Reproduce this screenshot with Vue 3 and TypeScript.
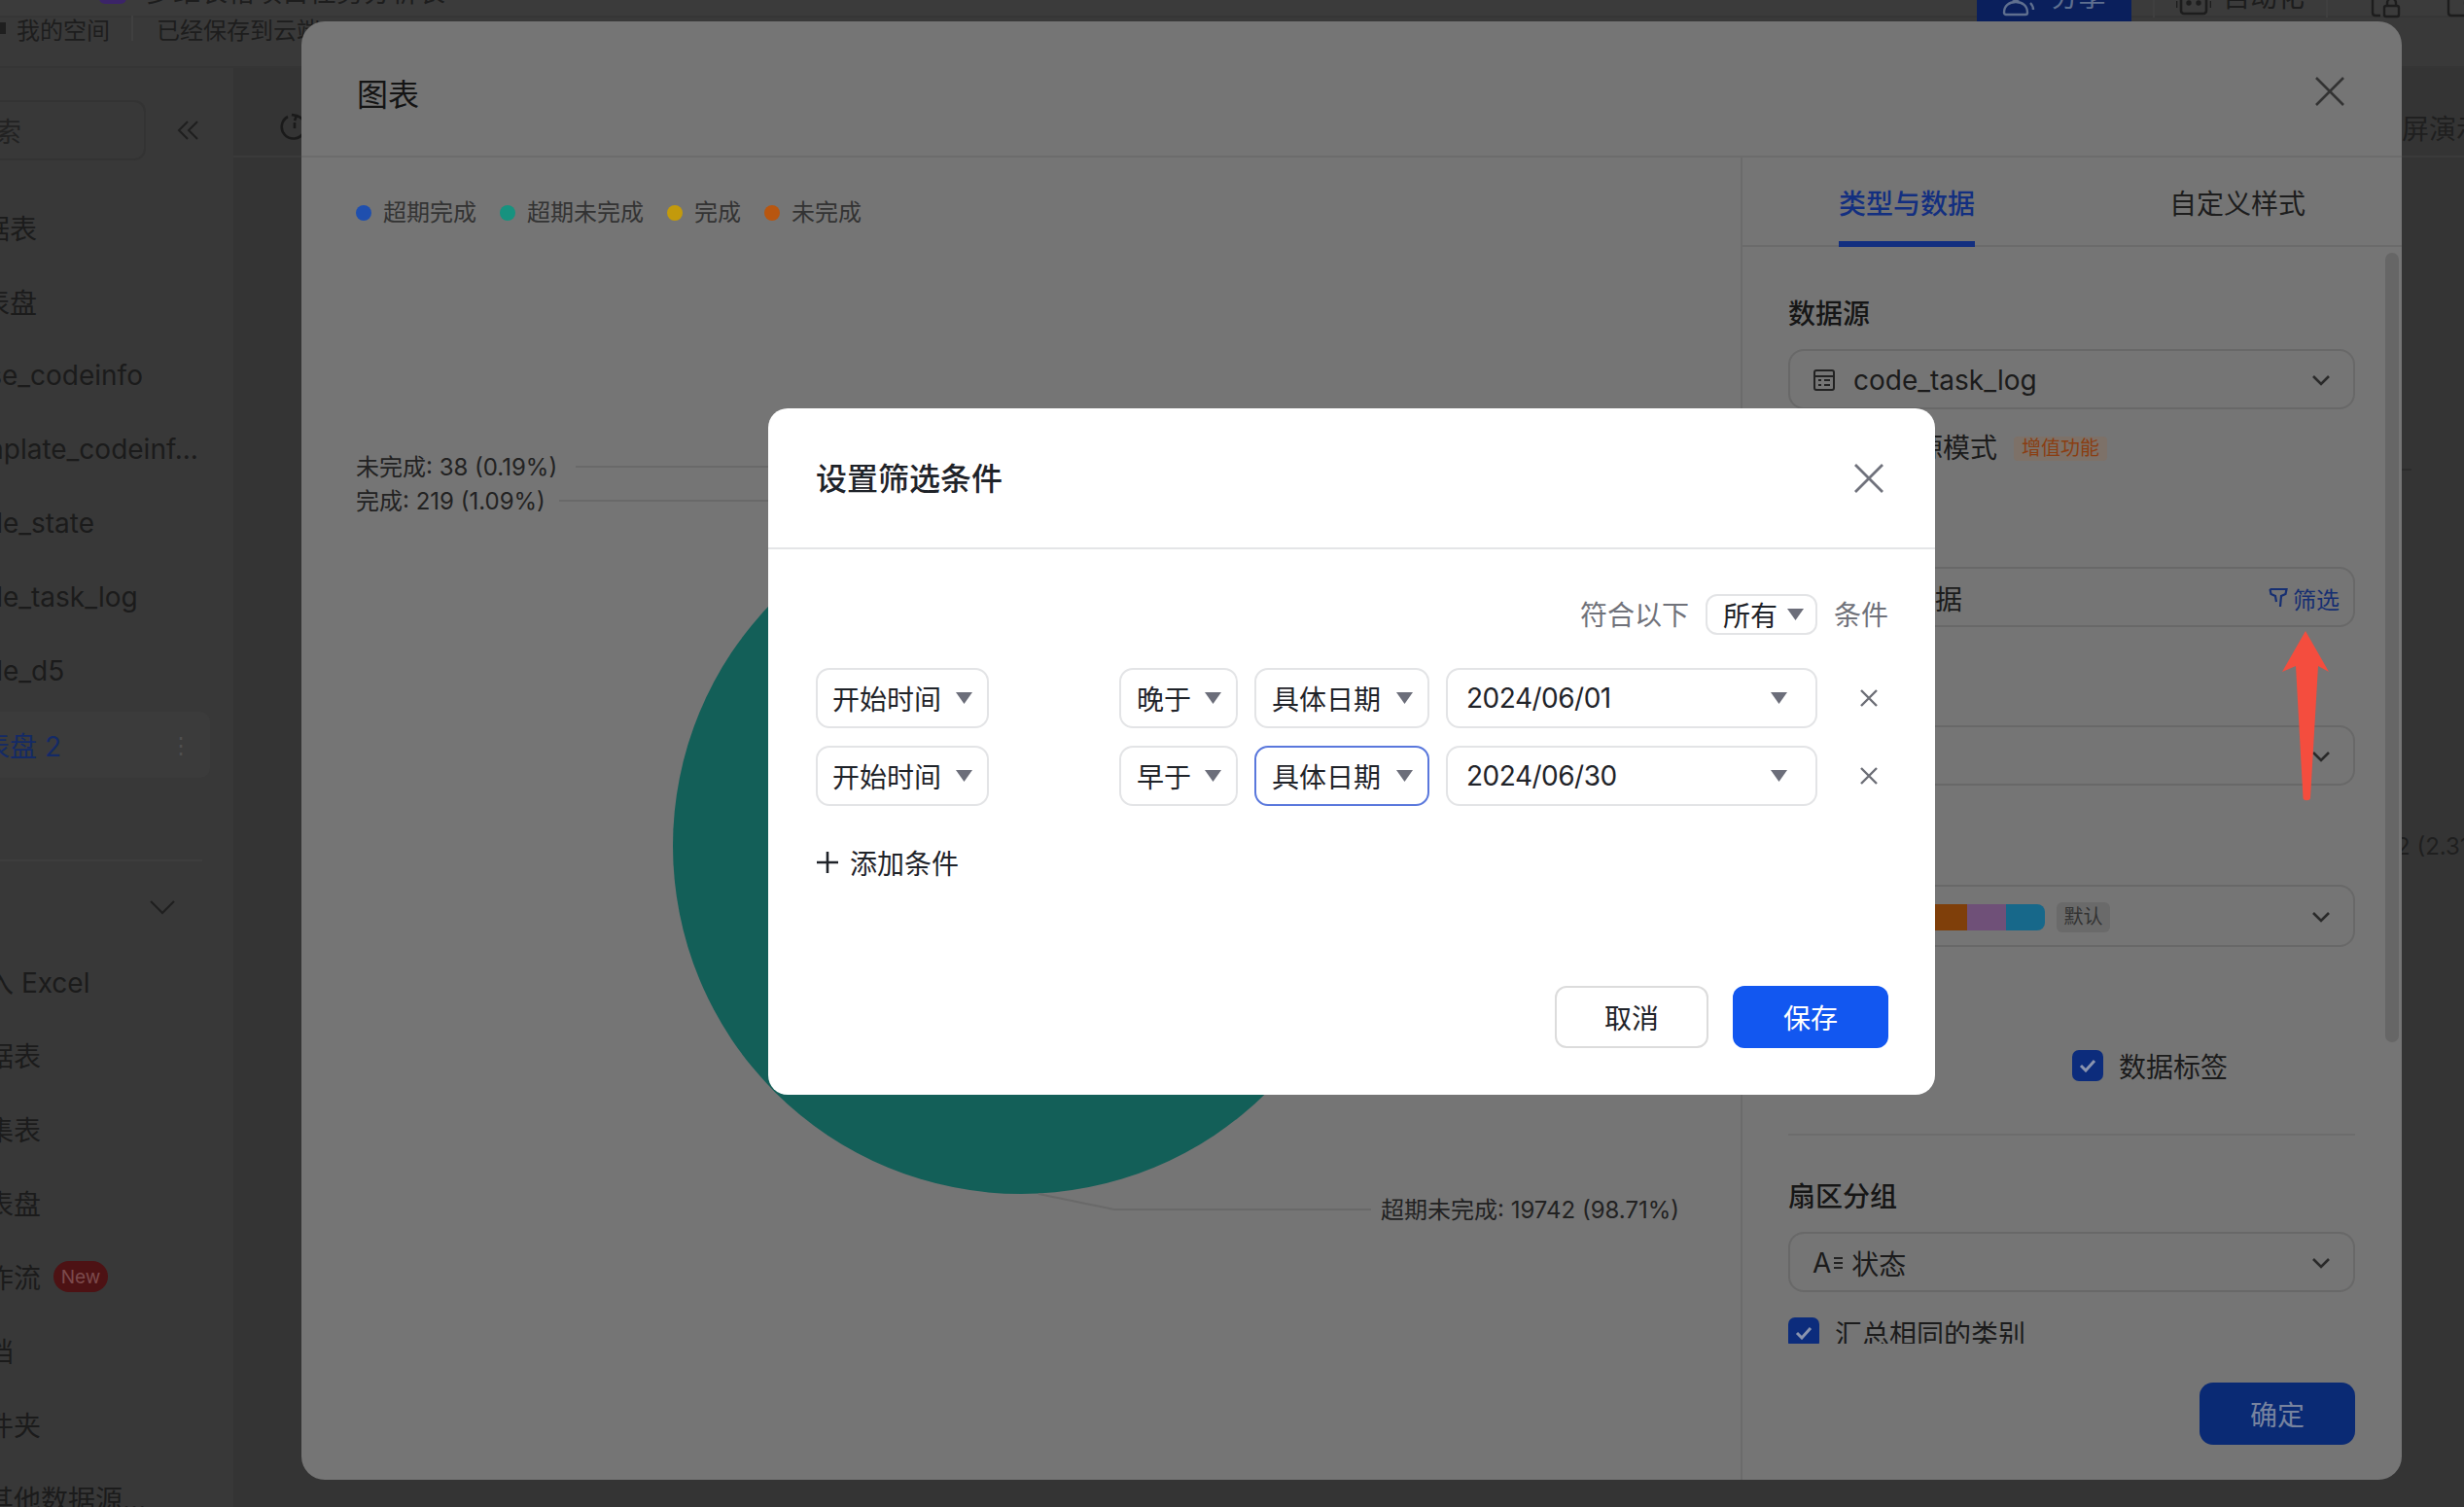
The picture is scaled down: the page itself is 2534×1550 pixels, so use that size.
<script setup lang="ts">
const treeTop = ['数据表', '仪表盘', 'base_codeinfo', 'template_codeinf...', 'table_state', 'table_task_log', 'table_d5']
const treeBottom = ['导入 Excel', '数据表', '收集表', '仪表盘', '工作流', '文档', '文件夹', '从其他数据源...']
const legend = [
  { label: '超期完成', color: '#1f4fae' },
  { label: '超期未完成', color: '#17927f' },
  { label: '完成', color: '#c39a0c' },
  { label: '未完成', color: '#b8560f' }
]
const swatches = ['#1f4fae', '#17927f', '#c39a0c', '#7f3f0a', '#6f5078', '#17688a']
const rules = [
  { op: '晚于', date: '2024/06/01', focus: false },
  { op: '早于', date: '2024/06/30', focus: true }
]
</script>

<template>
  <div class="page">
    <header class="topbar">
      <div class="doc-title">
        <span class="doc-logo"></span>
        <span>多维表格项目任务分析表</span>
      </div>
      <div class="top-actions">
        <span class="share">
          <svg width="34" height="34" viewBox="0 0 34 34" fill="none" stroke="#5f6f8f" stroke-width="2.4">
            <circle cx="14" cy="10" r="7" />
            <path d="M2 30c0-7 5-11 12-11s12 4 12 11c0 1-1 2-2 2H4c-1 0-2-1-2-2z" />
            <path d="M24 5c3 1 4 3 4 5s-1 4-3 5M29 20c2 2 3 4 3 7" />
          </svg>
          <span>分享</span>
        </span>
        <span class="sep"></span>
        <span class="auto">
          <svg width="36" height="34" viewBox="0 0 36 34" fill="none" stroke="#1d1d1d" stroke-width="2.6">
            <rect x="5" y="4" width="26" height="27" rx="3" />
            <path d="M0 18v7M36 18v7" />
            <circle cx="13" cy="20" r="1.4" fill="#1d1d1d" />
            <circle cx="23" cy="20" r="1.4" fill="#1d1d1d" />
          </svg>
          <span>自动化</span>
        </span>
        <span class="sep"></span>
        <svg class="top-icon" width="32" height="32" viewBox="0 0 32 32" fill="none" stroke="#1d1d1d" stroke-width="2.4">
          <path d="M2 4v22c0 2 1 3 3 3h5" />
          <rect x="14" y="19" width="15" height="11" rx="2" />
          <path d="M17 19v-3a4.500 4.500 0 0 1 9 0v3" />
        </svg>
        <svg class="top-icon last" width="36" height="32" viewBox="0 0 36 32" fill="none" stroke="#1d1d1d" stroke-width="2.4">
          <path d="M2 4v22c0 2 1 3 3 3h26" />
          <circle cx="26" cy="16" r="7" />
        </svg>
      </div>
    </header>
    <div class="subbar">
      <span class="crumb-mark"></span>
      <span class="crumb">我的空间</span>
      <span class="crumb-sep"></span>
      <span class="crumb">已经保存到云端</span>
    </div>

    <div class="workspace">
      <aside class="sidebar">
        <div class="search-row">
          <div class="search"><span>搜索</span></div>
          <svg width="24" height="22" viewBox="0 0 24 22" fill="none" stroke="#1f1f1f" stroke-width="2">
            <path d="M11 2 2 11l9 9M21 2l-9 9 9 9" />
          </svg>
        </div>
        <ul class="tree">
          <li v-for="item in treeTop" :key="item" class="tree-item">{{ item }}</li>
          <li class="tree-item active">
            <span>仪表盘 2</span>
            <span class="more">⋮</span>
          </li>
        </ul>
        <div class="side-rule"></div>
        <div class="side-toggle">
          <svg width="28" height="16" viewBox="0 0 28 16" fill="none" stroke="#1f1f1f" stroke-width="2">
            <path d="M2 2l12 12L26 2" />
          </svg>
        </div>
        <ul class="tree lower">
          <li v-for="item in treeBottom" :key="item" class="tree-item">
            <span>{{ item }}</span>
            <span v-if="item === '工作流'" class="new">New</span>
          </li>
        </ul>
      </aside>
      <main class="main">
        <div class="main-bar">
          <svg width="30" height="30" viewBox="0 0 30 30" fill="none" stroke="#1a1a1a" stroke-width="2.6">
            <path d="M8 4a12 12 0 1 0 9-1M12 2l5 1-2 5" />
            <path d="M15 10v6" />
          </svg>
          <span class="fullscreen">全屏演示</span>
        </div>
        <div class="main-canvas">
          <span class="behind-line"></span>
          <span class="behind-label">超期完成: 462 (2.31%)</span>
        </div>
      </main>
    </div>

    <!-- chart settings modal -->
    <section class="chart-modal">
      <header class="chart-head">
        <span class="chart-title">图表</span>
        <svg width="36" height="36" viewBox="0 0 36 36" fill="none" stroke="#333" stroke-width="2.6">
          <path d="M4 4l28 28M32 4 4 32" />
        </svg>
      </header>
      <div class="chart-body">
        <div class="chart-canvas">
          <svg class="chart-svg" width="1480" height="1360" viewBox="0 0 1480 1360" fill="none">
            <circle cx="740" cy="708" r="358" fill="#135f58" />
            <path d="M282 318H480M265 353H480M758 1066l78 16H1100" stroke="#696969" stroke-width="2" />
          </svg>
          <ul class="legend">
            <li v-for="l in legend" :key="l.label" class="legend-item">
              <i class="dot" :style="{ background: l.color }"></i>
              <span>{{ l.label }}</span>
            </li>
          </ul>
          <span class="pie-label one">未完成: 38 (0.19%)</span>
          <span class="pie-label two">完成: 219 (1.09%)</span>
          <span class="pie-label three">超期未完成: 19742 (98.71%)</span>
        </div>

        <div class="panel">
          <div class="tabs">
            <span class="tab on">类型与数据</span>
            <span class="tab">自定义样式</span>
          </div>
          <div class="panel-scroll">
            <div class="p-label l1">数据源</div>
            <div class="field first">
              <svg class="field-icon" width="24" height="24" viewBox="0 0 24 24" fill="none" stroke="#222" stroke-width="2">
                <rect x="2" y="2" width="20" height="20" rx="2" />
                <path d="M2 8h20M6 12h3M12 12h6M6 17h3M12 17h6" />
              </svg>
              <span class="grow">code_task_log</span>
              <svg class="chev" width="20" height="12" viewBox="0 0 20 12" fill="none" stroke="#2a2a2a" stroke-width="2.6"><path d="M2 2l8 8 8-8" /></svg>
            </div>
            <div class="check-row r1">
              <i class="box"></i>
              <span>多数据源模式</span>
              <span class="vip">增值功能</span>
            </div>
            <div class="p-label l2">数据范围</div>
            <div class="field">
              <svg class="field-icon" width="24" height="24" viewBox="0 0 24 24" fill="none" stroke="#222" stroke-width="2">
                <rect x="2" y="2" width="20" height="20" rx="2" />
              </svg>
              <span class="grow">全部数据</span>
              <span class="filter">
                <svg width="20" height="22" viewBox="0 0 20 22" fill="none" stroke="#162f72" stroke-width="2.2">
                  <path d="M1.500 2h17l-1 5-4.500 2-1 11M1.500 2l1 5 4.500 2 1 6" />
                </svg>
                <span>筛选</span>
              </span>
            </div>
            <div class="p-label l3">图表类型</div>
            <div class="field">
              <span class="grow">饼图</span>
              <svg class="chev" width="20" height="12" viewBox="0 0 20 12" fill="none" stroke="#2a2a2a" stroke-width="2.6"><path d="M2 2l8 8 8-8" /></svg>
            </div>
            <div class="p-label l4">配色</div>
            <div class="field tall">
              <span class="swatches">
                <i v-for="c in swatches" :key="c" :style="{ background: c }"></i>
              </span>
              <span class="default-tag">默认</span>
              <span class="grow"></span>
              <svg class="chev" width="20" height="12" viewBox="0 0 20 12" fill="none" stroke="#2a2a2a" stroke-width="2.6"><path d="M2 2l8 8 8-8" /></svg>
            </div>
            <div class="p-label l5">显示</div>
            <div class="check-grid">
              <label class="check"><i class="box on"><svg width="18" height="14" viewBox="0 0 18 14" fill="none" stroke="#8a94ae" stroke-width="3"><path d="M2 7l5 5 9-10" /></svg></i><span>图例</span></label>
              <label class="check"><i class="box on"><svg width="18" height="14" viewBox="0 0 18 14" fill="none" stroke="#8a94ae" stroke-width="3"><path d="M2 7l5 5 9-10" /></svg></i><span>数据标签</span></label>
            </div>
            <div class="p-rule"></div>
            <div class="p-label l6">扇区分组</div>
            <div class="field first">
              <span class="type-a">A</span>
              <svg class="type-lines" width="12" height="16" viewBox="0 0 12 16" fill="none" stroke="#222" stroke-width="2"><path d="M2 3h9M2 8h9M2 13h9" /></svg>
              <span class="grow">状态</span>
              <svg class="chev" width="20" height="12" viewBox="0 0 20 12" fill="none" stroke="#2a2a2a" stroke-width="2.6"><path d="M2 2l8 8 8-8" /></svg>
            </div>
            <label class="check r2"><i class="box on"><svg width="18" height="14" viewBox="0 0 18 14" fill="none" stroke="#8a94ae" stroke-width="3"><path d="M2 7l5 5 9-10" /></svg></i><span>汇总相同的类别</span></label>
          </div>
          <div class="panel-foot">
            <button class="ok">确定</button>
          </div>
          <span class="scrollbar"></span>
        </div>
      </div>
    </section>

    <!-- filter dialog -->
    <section class="dialog">
      <header class="dialog-head">
        <span class="dialog-title">设置筛选条件</span>
        <svg class="dialog-close" width="34" height="34" viewBox="0 0 34 34" fill="none" stroke="#70727c" stroke-width="2.8">
          <path d="M3 3l28 28M31 3 3 31" />
        </svg>
      </header>
      <div class="dialog-body">
        <div class="match-row">
          <span class="muted">符合以下</span>
          <span class="pick small">
            <span>所有</span>
            <svg width="17" height="12" viewBox="0 0 17 12"><path d="M0 0h17l-8.500 12z" fill="#6c6e7a" /></svg>
          </span>
          <span class="muted">条件</span>
        </div>
        <div v-for="(r, i) in rules" :key="i" class="rule">
          <span class="pick w-field">
            <span>开始时间</span>
            <svg width="17" height="12" viewBox="0 0 17 12"><path d="M0 0h17l-8.500 12z" fill="#6c6e7a" /></svg>
          </span>
          <span class="pick w-op">
            <span>{{ r.op }}</span>
            <svg width="17" height="12" viewBox="0 0 17 12"><path d="M0 0h17l-8.500 12z" fill="#6c6e7a" /></svg>
          </span>
          <span class="pick w-kind" :class="{ focus: r.focus }">
            <span>具体日期</span>
            <svg width="17" height="12" viewBox="0 0 17 12"><path d="M0 0h17l-8.500 12z" fill="#6c6e7a" /></svg>
          </span>
          <span class="pick w-date">
            <span class="date-text">{{ r.date }}</span>
            <svg width="17" height="12" viewBox="0 0 17 12"><path d="M0 0h17l-8.500 12z" fill="#6c6e7a" /></svg>
          </span>
          <svg class="rule-x" width="20" height="20" viewBox="0 0 20 20" fill="none" stroke="#6c6e76" stroke-width="2.400">
            <path d="M2 2l16 16M18 2 2 18" />
          </svg>
        </div>
        <div class="add">
          <svg width="24" height="24" viewBox="0 0 24 24" fill="none" stroke="#1f2329" stroke-width="2.600">
            <path d="M12 1v22M1 12h22" />
          </svg>
          <span>添加条件</span>
        </div>
      </div>
      <footer class="dialog-foot">
        <button class="btn cancel">取消</button>
        <button class="btn primary">保存</button>
      </footer>
    </section>

    <!-- hand-drawn annotation arrow -->
    <svg class="arrow" width="54" height="176" viewBox="0 0 54 176">
      <path d="M27 0 51 42 40 36 32 172c-.5 3-7 3-7.500 0L17 36 3 42z" fill="#f44d3e" />
    </svg>
  </div>
</template>

<style>
html,
body {
  margin: 0;
  background: #333;
}
</style>

<style scoped>
* {
  box-sizing: border-box;
}
ul {
  list-style: none;
  margin: 0;
  padding: 0;
}
.page {
  position: relative;
  width: 2534px;
  height: 1550px;
  overflow: hidden;
  background: #343434;
  font-family: "Inter", "Noto Sans CJK SC", sans-serif;
  font-size: 28px;
  color: #1b1b1b;
}
.topbar {
  margin-top: -42px;
  height: 60px;
  display: flex;
  justify-content: space-between;
  background: #3b3b3b;
  border-bottom: 2px solid #363636;
}
.doc-title {
  display: flex;
  align-items: flex-end;
  gap: 20px;
  padding-left: 102px;
  font-size: 28px;
  line-height: 46px;
  color: #1d1d1d;
}
.doc-logo {
  width: 28px;
  height: 40px;
  margin-bottom: 12px;
  border-radius: 6px;
  background: #3b2468;
}
.doc-title span:last-child {
  margin-bottom: 1px;
  height: 46px;
}
.top-actions {
  display: flex;
  align-items: flex-start;
  height: 64px;
}
.share {
  width: 159px;
  height: 64px;
  display: flex;
  align-items: flex-end;
  justify-content: center;
  gap: 16px;
  padding-bottom: 5px;
  background: #0a1f5c;
  color: #5f6f8f;
  line-height: 40px;
}
.sep {
  width: 2px;
  height: 60px;
  margin: 0 22px;
  background: #3f3f3f;
}
.auto {
  display: flex;
  align-items: flex-end;
  gap: 12px;
  height: 60px;
  padding-bottom: 1px;
  line-height: 40px;
  color: #1d1d1d;
}
.top-icon {
  margin-top: 29px;
  margin-left: 22px;
}
.top-icon.last {
  margin-left: 46px;
  margin-right: -18px;
}
.subbar {
  height: 52px;
  display: flex;
  align-items: center;
  padding-bottom: 28px;
  background: #393939;
  border-bottom: 2px solid #353535;
  font-size: 24px;
  color: #1d1d1d;
}
.crumb-mark {
  width: 6px;
  height: 12px;
  margin-right: 11px;
  background: #1f1f1f;
}
.crumb-sep {
  width: 2px;
  height: 26px;
  margin: 0 24px 0 22px;
  background: #404040;
}
.crumb {
  white-space: nowrap;
}
.workspace {
  display: flex;
  height: 1482px;
}
.sidebar {
  width: 240px;
  flex: none;
  background: #383838;
  overflow: hidden;
}
.search-row {
  display: flex;
  align-items: center;
  gap: 32px;
  margin-top: 33px;
}
.search {
  width: 150px;
  height: 62px;
  display: flex;
  align-items: center;
  justify-content: flex-start;
  border: 2px solid #333;
  border-left: 0;
  border-radius: 0 12px 12px 0;
  color: #222;
  overflow: hidden;
}
.search span {
  margin-left: -34px;
}
.tree {
  margin-top: 31px;
  margin-left: -46px;
  width: 262px;
}
.tree-item {
  height: 76px;
  display: flex;
  align-items: center;
  white-space: nowrap;
  color: #1b1b1b;
}
.tree-item.active {
  justify-content: space-between;
  height: 68px;
  margin-top: 4px;
  margin-bottom: 4px;
  padding-right: 18px;
  background: #3b3b3b;
  color: #142a66;
  border-radius: 0 10px 10px 0;
}
.more {
  color: #4f4f4f;
  font-size: 24px;
}
.side-rule {
  width: 208px;
  height: 2px;
  margin-top: 84px;
  background: #3d3d3d;
}
.side-toggle {
  height: 40px;
  margin-top: 27px;
  padding-left: 153px;
  display: flex;
  align-items: center;
}
.tree.lower {
  margin-top: 18px;
  margin-left: -42px;
}
.new {
  margin-left: 13px;
  width: 56px;
  height: 32px;
  border-radius: 16px;
  display: inline-flex;
  align-items: center;
  justify-content: center;
  background: #4d1214;
  color: #7c4a4c;
  font-size: 19px;
}
.main {
  flex: 1;
  min-width: 0;
  overflow: hidden;
}
.main-bar {
  height: 92px;
  display: flex;
  align-items: center;
  justify-content: space-between;
  padding: 32px 0 0 48px;
  border-bottom: 2px solid #3a3a3a;
}
.fullscreen {
  margin-right: -20px;
  color: #1f1f1f;
}
.main-canvas {
  position: relative;
  height: 1380px;
}
.behind-line {
  position: absolute;
  left: 2230px;
  top: 320px;
  width: 10px;
  height: 2px;
  background: #2c2c2c;
}
.behind-label {
  position: absolute;
  right: -38px;
  top: 692px;
  font-size: 24px;
  line-height: 34px;
  white-space: nowrap;
  color: #1f1f1f;
}

/* chart modal */
.chart-modal {
  position: absolute;
  left: 310px;
  top: 22px;
  width: 2160px;
  height: 1500px;
  display: flex;
  flex-direction: column;
  border-radius: 24px;
  background: #757575;
  overflow: hidden;
}
.chart-head {
  height: 140px;
  flex: none;
  padding: 0 55px 0 57px;
  display: flex;
  align-items: center;
  justify-content: space-between;
  border-bottom: 2px solid #6c6c6c;
}
.chart-head svg {
  margin-right: 1px;
  margin-top: 6px;
}
.chart-title {
  font-size: 32px;
  margin-top: 8px;
  color: #141414;
}
.chart-body {
  flex: 1;
  min-height: 0;
  display: flex;
}
.chart-canvas {
  position: relative;
  width: 1480px;
  flex: none;
  overflow: hidden;
}
.chart-svg {
  position: absolute;
  left: 0;
  top: 0;
}
.legend {
  position: relative;
  display: flex;
  gap: 24px;
  padding: 40px 0 0 56px;
  font-size: 24px;
  line-height: 34px;
  color: #333;
}
.legend-item {
  display: flex;
  align-items: center;
  gap: 12px;
}
.dot {
  width: 16px;
  height: 16px;
  border-radius: 50%;
}
.pie-label {
  position: absolute;
  font-size: 24px;
  line-height: 34px;
  white-space: nowrap;
  color: #222;
}
.pie-label.one {
  left: 56px;
  top: 302px;
}
.pie-label.two {
  left: 56px;
  top: 337px;
}
.pie-label.three {
  left: 1110px;
  top: 1066px;
}

/* right panel */
.panel {
  position: relative;
  flex: 1;
  display: flex;
  flex-direction: column;
  border-left: 2px solid #6b6b6b;
  min-width: 0;
}
.tabs {
  height: 92px;
  flex: none;
  display: flex;
  padding-left: 99px;
  gap: 200px;
  border-bottom: 2px solid #6b6b6b;
}
.tab {
  height: 92px;
  padding-top: 28px;
  line-height: 40px;
  color: #1d1d1d;
}
.tab.on {
  color: #132f80;
  font-weight: 500;
  border-bottom: 6px solid #132f80;
}
.panel-scroll {
  height: 1128px;
  flex: none;
  overflow: hidden;
  padding: 0 48px 0 47px;
}
.p-label {
  height: 40px;
  line-height: 40px;
  font-weight: 500;
  color: #161616;
}
.l1 {
  margin-top: 49px;
}
.l2 {
  margin-top: 45px;
}
.l3 {
  margin-top: 42px;
}
.l4 {
  margin-top: 43px;
}
.l5 {
  margin-top: 30px;
}
.l6 {
  margin-top: 43px;
}
.field {
  height: 62px;
  margin-top: 19px;
  display: flex;
  align-items: center;
  padding: 2px 23px 0 23px;
  border: 2px solid #686868;
  border-radius: 16px;
  color: #1b1b1b;
}
.field.first {
  margin-top: 16px;
}
.field.tall {
  height: 64px;
}
.field-icon {
  margin-right: 18px;
  flex: none;
}
.grow {
  flex: 1;
}
.chev {
  flex: none;
}
.check-row {
  height: 40px;
  margin-top: 18px;
  display: flex;
  align-items: center;
  gap: 15px;
  color: #1b1b1b;
}
.box {
  width: 32px;
  height: 32px;
  flex: none;
  display: inline-flex;
  align-items: center;
  justify-content: center;
  border-radius: 7px;
  border: 2px solid #666;
}
.box.on {
  background: #0c2c7c;
  border: 0;
}
.vip {
  margin-left: 2px;
  margin-top: 4px;
  padding: 0 8px;
  height: 25px;
  line-height: 25px;
  border-radius: 4px;
  font-size: 20px;
  background: #7d7168;
  color: #8a3e12;
}
.filter {
  display: flex;
  align-items: center;
  gap: 5px;
  margin-right: -9px;
  font-size: 24px;
  color: #162f72;
}
.swatches {
  display: flex;
  margin-left: -1px;
  height: 27px;
  border-radius: 8px;
  overflow: hidden;
}
.swatches i {
  width: 40px;
}
.default-tag {
  margin-left: 12px;
  width: 55px;
  height: 31px;
  line-height: 31px;
  text-align: center;
  border-radius: 6px;
  font-size: 20px;
  background: #6a6a6a;
  color: #333;
}
.check-grid {
  display: grid;
  grid-template-columns: 292px 1fr;
  height: 40px;
  margin-top: 32px;
}
.check {
  display: flex;
  align-items: center;
  gap: 16px;
  height: 40px;
  color: #1b1b1b;
}
.p-rule {
  height: 2px;
  margin-top: 50px;
  background: #6c6c6c;
}
.type-a {
  margin-right: 1px;
}
.type-lines {
  margin-right: 8px;
}
.r2 {
  margin-top: 22px;
}
.panel-foot {
  flex: 1;
  display: flex;
  justify-content: flex-end;
  padding: 40px 48px 0 0;
}
.ok {
  width: 160px;
  height: 64px;
  border: 0;
  border-radius: 14px;
  background: #0a2a74;
  font: inherit;
  color: #77839f;
}
.scrollbar {
  position: absolute;
  left: 661px;
  top: 98px;
  width: 14px;
  height: 812px;
  border-radius: 7px;
  background: #666;
}

/* dialog */
.dialog {
  position: absolute;
  left: 790px;
  top: 420px;
  width: 1200px;
  height: 706px;
  display: flex;
  flex-direction: column;
  border-radius: 20px;
  background: #fff;
  color: #1f2329;
}
.dialog-head {
  height: 145px;
  flex: none;
  padding: 0 51px 0 49px;
  display: flex;
  align-items: center;
  justify-content: space-between;
  border-bottom: 2px solid #e4e5e7;
}
.dialog-title {
  font-size: 32px;
  font-weight: 500;
  margin-top: -3px;
}
.dialog-body {
  padding: 46px 49px 0;
}
.match-row {
  display: flex;
  justify-content: flex-end;
  align-items: center;
  gap: 17px;
  height: 42px;
  margin-right: -1px;
  margin-bottom: 34px;
}
.muted {
  color: #70727a;
  margin-top: -2px;
}
.pick {
  height: 62px;
  display: flex;
  align-items: center;
  justify-content: space-between;
  padding: 0 15px 0 16px;
  border: 2px solid #e3e4e6;
  border-radius: 14px;
  background: #fff;
  white-space: nowrap;
  flex: none;
}
.pick.small {
  width: 115px;
  height: 42px;
  border-radius: 12px;
  padding: 0 12px 0 16px;
}
.rule {
  display: flex;
  align-items: center;
  gap: 17px;
  margin-bottom: 18px;
}
.w-field {
  width: 178px;
  margin-right: 117px;
  padding-left: 15px;
}
.w-op {
  width: 122px;
}
.w-kind {
  width: 180px;
}
.w-date {
  width: 382px;
  padding-left: 20px;
  padding-right: 29px;
}
.date-text {
  letter-spacing: -0.5px;
  margin-left: -1px;
}
.focus {
  border-color: #5a78dc;
}
.rule-x {
  margin-left: 26px;
}
.add {
  display: flex;
  align-items: center;
  gap: 11px;
  height: 40px;
  margin-top: 38px;
}
.dialog-foot {
  margin-top: auto;
  display: flex;
  justify-content: flex-end;
  gap: 25px;
  padding: 0 48px 48px 0;
}
.btn {
  width: 160px;
  height: 64px;
  border: 2px solid #dcdcdc;
  border-radius: 12px;
  background: #fff;
  font: inherit;
  color: #1f2329;
}
.btn.cancel {
  width: 158px;
}
.btn.primary {
  border: 0;
  background: #1257f0;
  color: #fff;
}
.arrow {
  position: absolute;
  left: 2344px;
  top: 649px;
}
</style>
